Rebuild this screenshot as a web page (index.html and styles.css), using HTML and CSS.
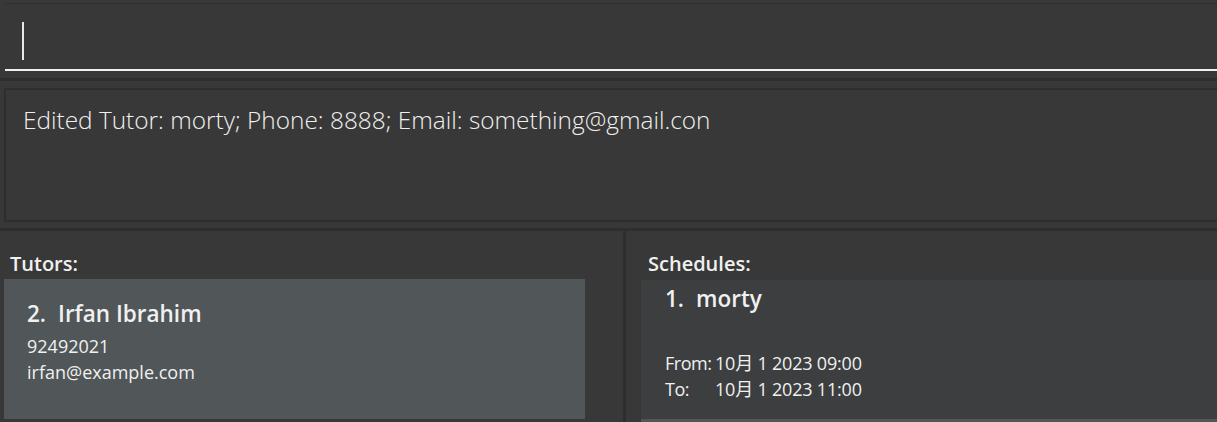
FILE: index.html
```html
<!DOCTYPE html>
<html>
<head>
<meta charset="utf-8">
<link rel="stylesheet" href="styles.css">
</head>
<body>
<div class="app">
  <div class="command-pane">
    <div class="command-box">
      <span class="caret"></span>
    </div>
  </div>
  <div class="result-pane">
    <div class="result-box">Edited Tutor: morty; Phone: 8888; Email: something@gmail.con</div>
  </div>
  <div class="lists">
    <div class="panel tutors">
      <div class="panel-title">Tutors:</div>
      <div class="card card-odd">
        <div class="card-name"><span class="idx">2.</span>Irfan Ibrahim</div>
        <div class="card-line">92492021</div>
        <div class="card-line">irfan@example.com</div>
      </div>
    </div>
    <div class="divider"></div>
    <div class="panel schedules">
      <div class="panel-title">Schedules:</div>
      <div class="card card-even sched">
        <div class="card-name"><span class="idx">1.</span>morty</div>
        <div class="times">
          <div class="card-line"><span class="lbl">From:</span>10月 1 2023 09:00</div>
          <div class="card-line"><span class="lbl">To:</span>10月 1 2023 11:00</div>
        </div>
      </div>
      <div class="card card-odd next"></div>
    </div>
  </div>
</div>
</body>
</html>
```
FILE: styles.css
```css
html, body {
  margin: 0;
  padding: 0;
  background: #383838;
  height: 100%;
  overflow: hidden;
}
body {
  font-family: "Open Sans", "Noto Sans CJK SC", sans-serif;
  color: #ffffff;
}
.app {
  display: flex;
  flex-direction: column;
  width: 1217px;
  height: 422px;
  overflow: hidden;
}
.command-pane {
  padding: 3px 0 7px 0;
  border-bottom: 3px solid #2e2e2e;
  flex-shrink: 0;
}
.command-box {
  border-top: 1px solid #2e2e2e;
  height: 68px;
  margin-left: 5px;
  border-bottom: 2px solid #f0f0f0;
  box-sizing: border-box;
  display: flex;
  padding-left: 17px;
  padding-top: 18px;
}
.caret {
  width: 2px;
  height: 38px;
  background: #e8e8e8;
}
.result-pane {
  padding: 7px 0 6px 4px;
  border-bottom: 3px solid #2e2e2e;
  flex-shrink: 0;
}
.result-box {
  height: 134px;
  box-sizing: border-box;
  border: 2px solid #2e2e2e;
  border-right: none;
  padding: 13px 0 0 17px;
  font-size: 24.4px;
  font-weight: 300;
  color: #f0f0f0;
}
.lists {
  display: flex;
  flex: 1;
  min-height: 0;
}
.panel {
  display: flex;
  flex-direction: column;
}
.tutors {
  width: 623px;
  padding-left: 4px;
  box-sizing: border-box;
}
.divider {
  width: 3px;
  background: #2e2e2e;
}
.schedules {
  flex: 1;
  padding-left: 15px;
}
.panel-title {
  font-size: 20px;
  font-weight: 600;
  color: #f0f0f0;
  padding: 19px 0 0 6px;
  height: 29px;
  line-height: 28px;
  flex-shrink: 0;
}
.schedules .panel-title {
  padding-left: 7px;
  height: 30px;
}
.card {
  box-sizing: border-box;
  flex-shrink: 0;
}
.card-odd {
  background: #515658;
}
.card-even {
  background: #3c3e3f;
}
.tutors .card {
  width: 581px;
  height: 140px;
  padding: 20px 0 0 23px;
}
.card-name {
  font-size: 22.5px;
  font-weight: 600;
  color: #f0f0f0;
  line-height: 30px;
}
.tutors .card-name {
  margin-bottom: 4px;
}
.idx {
  display: inline-block;
  margin-right: 12px;
}
.card-line {
  font-size: 18px;
  color: #f0f0f0;
  line-height: 26px;
}
.sched {
  height: 139px;
  padding: 4px 0 0 24px;
}
.times {
  margin-top: 36px;
}
.times .card-line {
  letter-spacing: -0.2px;
}
.lbl {
  display: inline-block;
  width: 50px;
  letter-spacing: -0.5px;
}
.next {
  height: 20px;
}
```
